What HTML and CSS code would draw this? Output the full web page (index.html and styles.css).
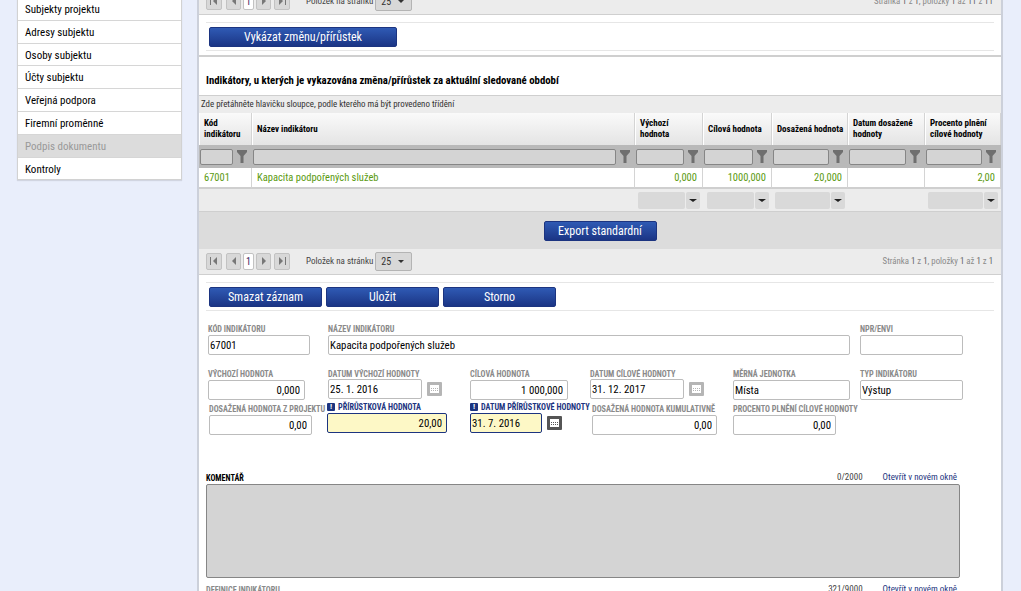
FILE: index.html
```html
<!DOCTYPE html>
<html lang="cs">
<head>
    <meta charset="utf-8">
    <title>Indikátory</title>
    <link rel="stylesheet" href="styles.css">
</head>
<body>
    <svg class="sprites" width="0" height="0">
        <symbol id="funnel" viewBox="0 0 10 13"><path d="M0 0h10v2L6.500 6v7h-3V6L0 2z"/></symbol>
        <symbol id="first" viewBox="0 0 8 8"><path d="M0 0h1v8H0zM7 0v8L3 4z"/></symbol>
        <symbol id="prev" viewBox="0 0 8 8"><path d="M6 0v8L2 4z"/></symbol>
        <symbol id="next" viewBox="0 0 8 8"><path d="M2 0v8l4-4z"/></symbol>
        <symbol id="last" viewBox="0 0 8 8"><path d="M1 0v8l4-4zM7 0h1v8H7z"/></symbol>
        <symbol id="cal" viewBox="0 0 15 14"><path d="M3 3h9v8H3zM4 6v1h1V6zm2 0v1h1V6zm2 0v1h1V6zm2 0v1h1V6zM4 8v1h1V8zm2 0v1h1V8zm2 0v1h1V8zm2 0v1h1V8z" fill-rule="evenodd"/></symbol>
    </svg>
    <div class="page">
        <aside class="sidebar">
            <ul class="menu">
                <li>Subjekty projektu</li>
                <li>Adresy subjektu</li>
                <li>Osoby subjektu</li>
                <li>Účty subjektu</li>
                <li>Veřejná podpora</li>
                <li>Firemní proměnné</li>
                <li class="disabled">Podpis dokumentu</li>
                <li>Kontroly</li>
            </ul>
        </aside>
        <main class="content">
            <div class="pager pager-top">
                <div class="pager-nav">
                    <span class="pg"><svg><use href="#first"/></svg></span>
                    <span class="pg"><svg><use href="#prev"/></svg></span>
                    <span class="pg-current">1</span>
                    <span class="pg"><svg><use href="#next"/></svg></span>
                    <span class="pg"><svg><use href="#last"/></svg></span>
                    <span class="pg-label">Položek na stránku</span>
                    <span class="pg-size">25<i class="caret"></i></span>
                </div>
                <div class="pg-info">Stránka <b>1</b> z <b>1</b>, položky <b>1</b> až <b>11</b> z <b>11</b></div>
            </div>

            <section class="panel action-panel">
                <div class="action-bar">
                    <button class="btn btn-report">Vykázat změnu/přírůstek</button>
                </div>
            </section>

            <section class="panel grid-panel">
                <h2 class="grid-title">Indikátory, u kterých je vykazována změna/přírůstek za aktuální sledované období</h2>
                <div class="group-hint">Zde přetáhněte hlavičku sloupce, podle kterého má být provedeno třídění</div>
                <table class="grid">
                    <colgroup>
                        <col class="c-kod"><col class="c-nazev"><col class="c-vych"><col class="c-cil"><col class="c-dos"><col class="c-dat"><col class="c-proc">
                    </colgroup>
                    <thead>
                        <tr class="head-row">
                            <th>Kód<br>indikátoru</th>
                            <th>Název indikátoru</th>
                            <th>Výchozí<br>hodnota</th>
                            <th>Cílová hodnota</th>
                            <th>Dosažená hodnota</th>
                            <th>Datum dosažené<br>hodnoty</th>
                            <th>Procento plnění<br>cílové hodnoty</th>
                        </tr>
                        <tr class="filter-row">
                            <td><div class="filter"><span class="filter-box"></span><svg><use href="#funnel"/></svg></div></td>
                            <td><div class="filter"><span class="filter-box"></span><svg><use href="#funnel"/></svg></div></td>
                            <td><div class="filter"><span class="filter-box"></span><svg><use href="#funnel"/></svg></div></td>
                            <td><div class="filter"><span class="filter-box"></span><svg><use href="#funnel"/></svg></div></td>
                            <td><div class="filter"><span class="filter-box"></span><svg><use href="#funnel"/></svg></div></td>
                            <td><div class="filter"><span class="filter-box"></span><svg><use href="#funnel"/></svg></div></td>
                            <td><div class="filter"><span class="filter-box"></span><svg><use href="#funnel"/></svg></div></td>
                        </tr>
                    </thead>
                    <tbody>
                        <tr class="data-row">
                            <td>67001</td>
                            <td>Kapacita podpořených služeb</td>
                            <td class="num">0,000</td>
                            <td class="num">1000,000</td>
                            <td class="num">20,000</td>
                            <td class="num"></td>
                            <td class="num">2,00</td>
                        </tr>
                    </tbody>
                    <tfoot>
                        <tr class="sum-row">
                            <td></td>
                            <td></td>
                            <td><div class="sum"><span class="sum-box"></span><span class="sum-btn"><i class="caret"></i></span></div></td>
                            <td><div class="sum"><span class="sum-box"></span><span class="sum-btn"><i class="caret"></i></span></div></td>
                            <td><div class="sum"><span class="sum-box"></span><span class="sum-btn"><i class="caret"></i></span></div></td>
                            <td></td>
                            <td><div class="sum"><span class="sum-box"></span><span class="sum-btn"><i class="caret"></i></span></div></td>
                        </tr>
                    </tfoot>
                </table>
                <div class="export-bar">
                    <button class="btn btn-export">Export standardní</button>
                </div>
                <div class="pager">
                    <div class="pager-nav">
                        <span class="pg"><svg><use href="#first"/></svg></span>
                        <span class="pg"><svg><use href="#prev"/></svg></span>
                        <span class="pg-current">1</span>
                        <span class="pg"><svg><use href="#next"/></svg></span>
                        <span class="pg"><svg><use href="#last"/></svg></span>
                        <span class="pg-label">Položek na stránku</span>
                        <span class="pg-size">25<i class="caret"></i></span>
                    </div>
                    <div class="pg-info">Stránka <b>1</b> z <b>1</b>, položky <b>1</b> až <b>1</b> z <b>1</b></div>
                </div>
            </section>

            <section class="detail">
                <div class="action-bar action-bar-form">
                    <button class="btn btn-form">Smazat záznam</button>
                    <button class="btn btn-form">Uložit</button>
                    <button class="btn btn-form">Storno</button>
                </div>

                <div class="form-row row-1">
                    <label class="field f-kod"><span class="lbl">Kód indikátoru</span><input value="67001" readonly></label>
                    <label class="field f-nazev"><span class="lbl">Název indikátoru</span><input value="Kapacita podpořených služeb" readonly></label>
                    <label class="field f-npr"><span class="lbl">NPR/ENVI</span><input readonly></label>
                </div>

                <div class="form-row row-2">
                    <label class="field f-vych"><span class="lbl">Výchozí hodnota</span><input class="right" value="0,000" readonly></label>
                    <label class="field f-date1"><span class="lbl">Datum výchozí hodnoty</span><span class="date-wrap"><input value="25. 1. 2016" readonly><svg class="cal"><use href="#cal"/></svg></span></label>
                    <label class="field f-cil"><span class="lbl">Cílová hodnota</span><input class="right" value="1 000,000" readonly></label>
                    <label class="field f-date2"><span class="lbl">Datum cílové hodnoty</span><span class="date-wrap"><input value="31. 12. 2017" readonly><svg class="cal"><use href="#cal"/></svg></span></label>
                    <label class="field f-mj"><span class="lbl">Měrná jednotka</span><input value="Místa" readonly></label>
                    <label class="field f-typ"><span class="lbl">Typ indikátoru</span><input value="Výstup" readonly></label>
                </div>

                <div class="form-row row-3">
                    <label class="field f-dosproj"><span class="lbl">Dosažená hodnota z projektu</span><input class="right" value="0,00" readonly></label>
                    <label class="field f-prir req"><span class="lbl lbl-req"><i class="bang">!</i>Přírůstková hodnota</span><input class="right" value="20,00"></label>
                    <label class="field f-date3 req"><span class="lbl lbl-req"><i class="bang">!</i>Datum přírůstkové hodnoty</span><span class="date-wrap"><input value="31. 7. 2016"><svg class="cal cal-on"><use href="#cal"/></svg></span></label>
                    <label class="field f-kum"><span class="lbl">Dosažená hodnota kumulativně</span><input class="right" value="0,00" readonly></label>
                    <label class="field f-proc"><span class="lbl">Procento plnění cílové hodnoty</span><input class="right" value="0,00" readonly></label>
                </div>

                <div class="note note-komentar">
                    <div class="note-head">
                        <span class="note-title">Komentář</span>
                        <span class="note-count">0/2000</span>
                        <a class="note-link">Otevřít v novém okně</a>
                    </div>
                    <div class="note-box"></div>
                </div>

                <div class="note note-definice">
                    <div class="note-head">
                        <span class="note-title note-title-off">Definice indikátoru</span>
                        <span class="note-count">321/9000</span>
                        <a class="note-link">Otevřít v novém okně</a>
                    </div>
                </div>
            </section>
        </main>
    </div>
</body>
</html>
```

FILE: styles.css
```css
/* zakladni rozvrzeni */
html, body {
    height: 591px;
    overflow: hidden;
}
body {
    margin: 0;
    background: #e9eefb;
    font-family: "Roboto Condensed", "Liberation Sans Narrow", Roboto, sans-serif;
    font-size: 11px;
    color: #000;
}
.sprites {
    display: block;
    height: 0;
}
.page {
    display: flex;
    align-items: flex-start;
}

/* levy sloupec */
.sidebar {
    width: 165px;
    margin-left: 17px;
    flex: none;
}
.menu {
    list-style: none;
    margin: -2px 0 0;
    padding: 0;
    background: #fff;
    border: 1px solid #d2d2d2;
    border-top: 0;
    box-shadow: 0 1px 1px rgba(0, 0, 0, 0.1);
}
.menu li {
    height: 21.8px;
    line-height: 23px;
    padding-left: 7px;
    border-bottom: 1px solid #d6d6d6;
}
.menu li:last-child {
    border-bottom: 0;
}
.menu .disabled {
    background: #dcdcdc;
    color: #999;
}

/* hlavni panel */
.content {
    width: 802px;
    margin-left: 15px;
    background: #fff;
    border-left: 2px solid #ccd0da;
    border-right: 2px solid #ccd0da;
    flex: none;
}

.pager {
    display: flex;
    justify-content: space-between;
    align-items: center;
    height: 24px;
    padding: 0 8px 1px 7px;
    background: #ececec;
    border-bottom: 1px solid #cfcfcf;
}
.pager-top {
    margin-top: -11px;
}
.pager-nav {
    display: flex;
    align-items: center;
}
.pg {
    width: 16px;
    height: 17px;
    display: flex;
    align-items: center;
    justify-content: center;
    background: #d8d8d8;
    border: 1px solid #c2c2c2;
    border-radius: 2px;
    box-sizing: border-box;
}
.pg svg {
    width: 8px;
    height: 8px;
    fill: #777;
}
.pg:nth-child(1) {
    margin-right: 4px;
}
.pg:nth-child(2) {
    width: 15px;
    margin-right: 2px;
}
.pg:nth-child(4) {
    width: 15px;
    margin-right: 3px;
}
.pg-current {
    width: 11px;
    height: 17px;
    margin-right: 2px;
    line-height: 15px;
    text-align: center;
    background: #fff;
    border: 1px solid #c2c2c2;
    border-radius: 2px;
    box-sizing: border-box;
    color: #401a60;
    font-size: 10px;
}
.pg-label {
    margin: 0 2px 0 16px;
    font-size: 9px;
    color: #444;
}
.pg-size {
    position: relative;
    width: 37px;
    height: 19px;
    line-height: 18px;
    padding-left: 5px;
    box-sizing: border-box;
    background: #d8d8d8;
    border: 1px solid #b4b4b4;
    border-radius: 2px;
    font-size: 10px;
    color: #333;
}
.pg-size .caret {
    position: absolute;
    right: 7px;
    top: 7px;
    border-width: 3px 3px 0;
}
.pg-info {
    font-size: 8.8px;
    color: #8a8a8a;
}
.pg-info b {
    color: #666;
    font-weight: 400;
}
.caret {
    display: inline-block;
    width: 0;
    height: 0;
    border-left: 4px solid transparent;
    border-right: 4px solid transparent;
    border-top: 4px solid #333;
}

/* tlacitka */
.btn {
    height: 20px;
    padding: 0;
    color: #fff;
    font-family: inherit;
    font-size: 12px;
    font-weight: 400;
    background: linear-gradient(#2f5ab4, #1b3585);
    border: 1px solid #1c3480;
    border-radius: 2px;
}
.btn-report {
    width: 188px;
}
.btn-export {
    width: 113px;
}
.btn-form {
    width: 113px;
}

.panel {
    background: #fff;
}
.action-panel {
    padding: 7px 7px 4px;
    border-bottom: 2px solid #cfcfcf;
}
.action-bar {
    display: flex;
    gap: 4px;
    padding: 4px 0 3px 3px;
    border-top: 1px solid #e6e6e6;
    border-bottom: 1px solid #e6e6e6;
}

/* tabulka */
.grid-title {
    margin: 0;
    height: 38px;
    padding: 0 7px;
    line-height: 47px;
    font-size: 10.8px;
    font-weight: 700;
    box-sizing: border-box;
}
.group-hint {
    height: 18px;
    line-height: 17px;
    padding-left: 2px;
    box-sizing: border-box;
    background: #ececec;
    border-top: 1px solid #cfcfcf;
    font-size: 8.9px;
    color: #333;
}
.grid {
    width: 802px;
    table-layout: fixed;
    border-collapse: separate;
    border-spacing: 0;
}
.c-kod { width: 53px; }
.c-nazev { width: 383px; }
.c-vych { width: 68px; }
.c-cil { width: 69px; }
.c-dos { width: 76px; }
.c-dat { width: 77px; }
.c-proc { width: 76px; }

.head-row th {
    height: 32px;
    padding: 0 0 0 4px;
    text-align: left;
    font-size: 9px;
    line-height: 11px;
    font-weight: 700;
    white-space: nowrap;
    background: linear-gradient(#fafafa, #e4e4e4);
    border-left: 1px solid #fff;
    border-right: 1px solid #d4d4d4;
    box-sizing: border-box;
}
.filter-row td {
    height: 23px;
    padding: 0;
    background: #b9b9b9;
}
.filter {
    display: flex;
    align-items: center;
    gap: 4px;
    padding: 0 5px 0 1px;
}
.filter-box {
    flex: 1;
    height: 14px;
    background: #d4d4d4;
    border: 1px solid #868686;
    border-radius: 2px;
}
.filter svg {
    width: 10px;
    height: 13px;
    fill: #6f6f6f;
    flex: none;
}
.data-row td {
    height: 19px;
    padding: 0 5px;
    font-size: 10.5px;
    color: #5b9a10;
    background: #fff;
    border-right: 1px solid #d4d4d4;
    border-bottom: 2px solid #cfcfcf;
}
.data-row td.num {
    text-align: right;
}
.sum-row td {
    height: 22px;
    padding: 0 3px;
    background: #ececec;
    border-bottom: 1px solid #cfcfcf;
}
.sum-row td:nth-child(4) {
    padding-left: 4px;
}
.sum {
    display: flex;
    gap: 1px;
}
.sum-box {
    flex: 1;
    height: 17px;
    background: #d9d9d9;
    border-radius: 2px;
}
.sum-btn {
    width: 14px;
    height: 17px;
    display: flex;
    align-items: center;
    justify-content: center;
    background: #d9d9d9;
    border-radius: 2px;
}
.sum-btn .caret {
    border-width: 3px 4px 0;
    border-top-color: #222;
}
.export-bar {
    display: flex;
    justify-content: center;
    align-items: center;
    height: 37px;
    background: #dcdcdc;
}

/* formular */
.detail {
    padding: 7px 7px 0;
}
.action-bar-form {
    padding: 4px 0 3px 3px;
}
.form-row {
    display: flex;
    align-items: flex-start;
}
.field {
    display: block;
    flex: none;
}
.lbl {
    display: block;
    height: 9px;
    line-height: 9px;
    margin-bottom: 1px;
    font-size: 8.2px;
    font-weight: 700;
    color: #8a8a8a;
    text-transform: uppercase;
    white-space: nowrap;
}
.lbl-req {
    color: #1c3480;
}
.bang {
    display: inline-block;
    width: 8px;
    height: 8px;
    line-height: 8px;
    margin-right: 3px;
    text-align: center;
    font-style: normal;
    font-size: 8px;
    color: #fff;
    background: #1c3480;
    border-radius: 1px;
    vertical-align: 1px;
}
.field input {
    display: block;
    width: 100%;
    height: 20px;
    padding: 0 4px 0 1px;
    box-sizing: border-box;
    font-family: inherit;
    font-size: 10.8px;
    color: #000;
    background: #fff;
    border: 1px solid #bcbcbc;
    border-radius: 2px;
    outline: 0;
}
.field input.right {
    text-align: right;
}
.field.req input {
    background: #fdf8c6;
    border-color: #1c3480;
}
.date-wrap {
    display: flex;
    align-items: center;
}
.row-2 .date-wrap {
    margin-top: -1px;
}
.cal {
    flex: none;
    width: 15px;
    height: 14px;
    margin-left: 5px;
    padding: 0;
    fill: #fff;
    background: #b5b5b5;
    border-radius: 1px;
}
.cal-on {
    background: #555;
}

.row-1 { margin-top: 14px; }
.row-2 { margin-top: 15px; }
.row-3 { margin-top: 3px; }

.f-kod { width: 102px; margin-left: 2px; }
.f-nazev { width: 522px; margin-left: 18px; }
.f-npr { width: 103px; margin-left: 10px; }

.f-vych { width: 97px; margin-left: 2px; }
.f-date1 { width: 113px; margin-left: 23px; }
.field.f-date1 input, .field.f-date2 input { width: 94px; }
.f-cil { width: 98px; margin-left: 29px; }
.f-date2 { width: 113px; margin-left: 22px; }
.f-mj { width: 117px; margin-left: 30px; }
.f-typ { width: 103px; margin-left: 10px; }

.f-dosproj { width: 103px; margin: 2px 0 0 3px; }
.f-prir { width: 120px; margin-left: 15px; }
.f-date3 { width: 91px; margin-left: 23px; }
.field.f-date3 input { width: 72px; }
.f-kum { width: 125px; margin: 2px 0 0 31px; }
.f-proc { width: 103px; margin: 2px 0 0 16px; }
.f-dosproj input, .f-kum input, .f-proc input { margin-top: 1px; }

.note {
    width: 754px;
}
.note-head {
    display: flex;
    align-items: center;
    height: 15px;
    font-size: 9px;
}
.note-title {
    margin-right: auto;
    padding-top: 2px;
    font-size: 8.2px;
    font-weight: 700;
    text-transform: uppercase;
}
.note-title-off {
    color: #8a8a8a;
}
.note-count {
    color: #444;
}
.note-link {
    margin: 0 3px 0 20px;
    color: #1c3480;
}
.note-komentar {
    margin-top: 34px;
}
.note-box {
    height: 94px;
    box-sizing: border-box;
    background: #d4d4d4;
    border: 1px solid #868686;
    border-radius: 2px;
}
.note-definice {
    margin-top: 3px;
}
```
